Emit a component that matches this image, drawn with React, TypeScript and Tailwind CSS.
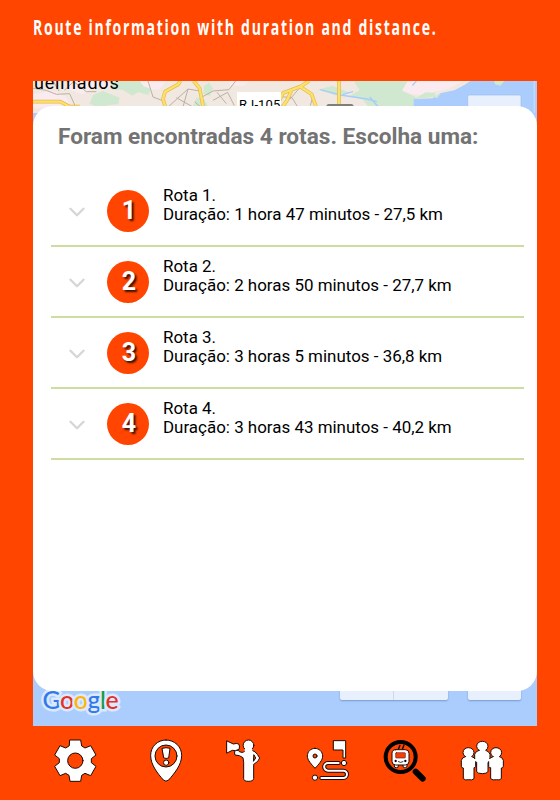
import React, { ReactNode } from "react";
import { ChevronDown } from "lucide-react";

type Route = {
    id: number;
    duration: string;
    distance: string;
};

const routes: Route[] = [
    { id: 1, duration: "1 hora 47 minutos", distance: "27,5 km" },
    { id: 2, duration: "2 horas 50 minutos", distance: "27,7 km" },
    { id: 3, duration: "3 horas 5 minutos", distance: "36,8 km" },
    { id: 4, duration: "3 horas 43 minutos", distance: "40,2 km" },
];

const MapTop: React.FC = () => (
    <svg viewBox="0 0 1512 96" className="block w-[504px] h-8">
        <rect width="1512" height="96" fill="#f1e9e1" />
        <g fill="#f9ebef">
            <path d="M110 0h150l-20 18-55 0-35 22-40-14zM0 40l60-10 40 18 10 20-60 14H0zM300 0h100l-20 25-60 5zM590 0h60l-20 14-40-2z" />
            <path d="M1110 0h180l-40 22-90 20-60-8z" />
        </g>
        <g fill="#d0e8cf">
            <path d="M230 0h90l12 16 22 8-8 18-30-8-18 10-30-18-30 0zM180 42l30-12 50 20-4 20-30 2-20 12-36-16zM262 0h40l18 22-40-6z" />
            <path d="M512 16l16-12 12 18-10 24-18-8zM490 50l24 6 14 24h-50z" />
            <path d="M962 0h162l-20 34-4 62h-80l-30-40-40-12 30-16zM854 26l44-12 50 20-30 12z" />
            <path d="M1090 20l62 30v46h-62z" />
        </g>
        <g fill="none" stroke="#bdb0a4" strokeWidth="3">
            <path d="M0 22l40 6 30 12 40-2 26 58M60 0l18 30M94 28l30-28M120 0l40 32 30 0M345 0l15 48 32 12M405 78l60-54 36 6M465 24l-15 54M430 50l50 28M485 62l18 16M500 52l40-22 48-4 20-26M540 58l44-24 20 40M552 34l28 34M735 46l42 4 16 26M800 20l-30 36M810 20l30 24-8 30" />
        </g>
        <g stroke="#a5cdfd" fill="none" strokeWidth="4">
            <path d="M862 26l60 16 80 12 30 8M1010 48l26 30M930 40l30-8" />
            <path d="M1150 0l-12 14" />
        </g>
        <path
            fill="#abcdfe"
            d="M1142 96V54l56-2 26-16 40-8 30-16 18-12h200v96z"
        />
        <path
            fill="#d0e8cf"
            d="M1144 54l34-20 30 2-6 12zM1384 0h30l-12 14-16-4zM1198 46l24-6-10 12z"
        />
        <path fill="none" stroke="#c5dcff" strokeWidth="4" d="M1504 0v96" />
        <g
            fill="none"
            stroke="#e6b84b"
            strokeWidth="11"
            strokeLinejoin="round"
        >
            <path d="M0 62h82l28 15h30M442 0l-6 10-40 22-6 22 12 42M482 0l18 22 14 74M775 30l-14 30-14 20M918 0v96M828 0l-24 16-54 20-18 40M800 16l36 24 14 40" />
        </g>
        <g fill="none" stroke="#fde26a" strokeWidth="7" strokeLinejoin="round">
            <path d="M0 62h82l28 15h30M442 0l-6 10-40 22-6 22 12 42M482 0l18 22 14 74M775 30l-14 30-14 20M918 0v96M828 0l-24 16-54 20-18 40M800 16l36 24 14 40" />
        </g>
        <rect x="612" y="33" width="132" height="63" fill="#fff" />
        <rect x="880" y="69" width="82" height="27" rx="8" fill="#7c8076" />
        <rect
            x="1304"
            y="42"
            width="160"
            height="60"
            rx="5"
            fill="#e8f0fe"
            stroke="#9bbbe9"
            strokeWidth="2"
        />
    </svg>
);

const GoogleLogo: React.FC = () => (
    <div className="absolute left-[9.5px] bottom-[10px] font-['Lato'] font-medium text-[24.8px] leading-8 tracking-[-0.4px] [-webkit-text-stroke:5px_#dbe8fd] [paint-order:stroke_fill] whitespace-nowrap">
        <span className="text-[#3079ed]">G</span>
        <span className="text-[#e53125]">o</span>
        <span className="text-[#fbb605]">o</span>
        <span className="text-[#3079ed]">g</span>
        <span className="text-[#159b45]">l</span>
        <span className="text-[#e53125]">e</span>
    </div>
);

const RouteRow: React.FC<{ route: Route }> = ({ route }) => (
    <li className="flex h-[71px] border-b-2 border-[#cddd9f]">
        <ChevronDown
            className="ml-[14px] mt-[24px] w-6 h-6 text-[#d6d6d6]"
            strokeWidth={2.2}
            viewBox="1 1 22 22"
        />
        <div className="ml-[18px] mt-[13.5px] flex size-[42px] items-center justify-center rounded-full bg-[#ff4500] pl-[2px] text-[25px] font-bold text-white [text-shadow:2px_2px_2px_#3b1000]">
            {route.id}
        </div>
        <div className="ml-[14px] mt-[10px] text-[16.95px] leading-[19px] text-black whitespace-nowrap">
            <p>Rota {route.id}.</p>
            <p>
                Duração: {route.duration} - {route.distance}
            </p>
        </div>
    </li>
);

type NavIconProps = {
    viewBox: string;
    className: string;
    children: ReactNode;
};

const NavIcon: React.FC<NavIconProps> = ({ viewBox, className, children }) => (
    <svg
        viewBox={viewBox}
        className={`h-[43px] shrink-0 ${className}`}
        fill="#fff"
        stroke="#1c0a05"
        strokeWidth="3"
        strokeLinejoin="round"
        strokeLinecap="round"
    >
        {children}
    </svg>
);

const BottomNav: React.FC = () => (
    <nav className="flex h-[74px] pt-[13px]">
        {/* settings */}
        <NavIcon viewBox="-64 -65 129 129" className="ml-[54px] w-[43px]">
            <path d="M-16-62H16L19-44 29-38 46-45 62-17 48-6V6L62 17 46 45 29 38 19 44 16 62H-16L-19 44-29 38-46 45-62 17-48 6V-6L-62-17-46-45-29-38-19-44Z" />
            <circle r="23" fill="#ff4500" />
        </NavIcon>
        {/* alert */}
        <NavIcon viewBox="0 0 99 129" className="ml-[53px] w-[33px]">
            <path d="M48 3C22 3 2 23 2 49C2 79 24 104 40 123Q48 130 56 123C72 104 95 79 95 49C95 23 74 3 48 3Z" />
            <circle cx="48" cy="51" r="33" fill="#ff4500" />
            <path d="M37 28Q48 24 60 28L56 57Q48 60 42 57Z" />
            <circle cx="48.500" cy="71" r="8" />
        </NavIcon>
        {/* announcer */}
        <NavIcon viewBox="0 0 105 129" className="ml-[43px] w-[35px]">
            <path d="M54 38Q58 34 67 34H78Q88 37 94 46L101 57Q98 68 83 76V119Q82 127 67 127Q53 127 53 119V70L51 56 40 50 27 48Q24 43 27 34L38 34 40 38 47 40Z" />
            <path d="M3 6L22 15Q34 11 39 16 42 24 39 31L28 35 19 34 3 42Z" />
            <circle cx="67.500" cy="19" r="16" />
            <path stroke="none" d="M56 30H79V42H56Z" />
            <path d="M84 48L89 57 83 66Z" fill="#ff4500" />
        </NavIcon>
        {/* route */}
        <NavIcon viewBox="0 0 129 129" className="ml-[45px] w-[43px]">
            <path d="M27 28C14 28 4 38 4 51C4 64 17 76 27 88C38 76 50 64 50 51C50 38 39 28 27 28Z" />
            <circle cx="27" cy="51" r="6" fill="#ff4500" />
            <path d="M83 5H119V57H111V33H83Z" />
            <path
                d="M98 72H66A11.500 11.500 0 0 0 66 95H112A10.500 10.500 0 0 1 112 117H46"
                fill="none"
                strokeWidth="12"
            />
            <path
                d="M98 72H66A11.500 11.500 0 0 0 66 95H112A10.500 10.500 0 0 1 112 117H46"
                fill="none"
                stroke="#fff"
                strokeWidth="6"
            />
            <circle cx="114" cy="72" r="8" />
            <circle cx="27" cy="116" r="8" />
        </NavIcon>
        {/* bus search, current page */}
        <NavIcon viewBox="0 0 129 129" className="ml-[34px] w-[43px]">
            <circle
                cx="53"
                cy="54"
                r="45"
                fill="none"
                stroke="#000"
                strokeWidth="12"
            />
            <path d="M98 98L119 119" stroke="#000" strokeWidth="18" />
            <path d="M46 31L51 19M58 31L63 18" stroke="#000" strokeWidth="4" />
            <rect x="34" y="72" width="12" height="14" rx="5" />
            <rect x="60" y="72" width="12" height="14" rx="5" />
            <rect x="27" y="32" width="51" height="46" rx="11" />
            <rect
                x="38"
                y="41"
                width="29"
                height="16"
                rx="2"
                fill="#f63d0c"
                stroke="#6b2415"
                strokeWidth="2"
            />
            <path d="M46 68Q53 73 60 68" fill="none" strokeWidth="2.5" />
            <g fill="#000" stroke="none">
                <circle cx="38" cy="66" r="3.5" />
                <circle cx="67" cy="66" r="3.5" />
            </g>
        </NavIcon>
        {/* community */}
        <NavIcon viewBox="0 0 132 129" className="ml-[34px] w-[44px]">
            <path d="M57 34Q50 29 50 22C50 12 58 7 67 7S84 12 84 22Q84 29 77 34Q88 37 90 46V68Q87 74 84 70V98Q80 104 67 104Q53 104 50 98V70Q46 72 44 66V46Q46 37 57 34Z" />
            <path d="M16 53Q9 48 9 41C9 31 17 26 25 26S42 31 42 41Q42 48 35 53Q44 54 47 64V82Q45 88 42 86V119Q36 125 26 122Q16 125 10 119V87Q5 88 4 82V64Q6 55 16 53Z" />
            <path d="M99 53Q92 48 92 41C92 31 100 26 108 26S125 31 125 41Q125 48 118 53Q127 54 130 64V82Q128 88 124 87V119Q118 125 109 122Q98 125 92 119V86Q88 88 86 82V64Q89 55 99 53Z" />
            {/* joins the shoulders */}
            <path stroke="none" d="M40 60H51V67H40ZM82 60H93V67H82Z" />
        </NavIcon>
    </nav>
);

const App: React.FC = () => {
    return (
        <div className="w-[560px] h-[800px] overflow-hidden bg-[#ff4500] font-['Roboto',sans-serif]">
            <header className="h-[81px] pl-[33px] pt-[12px]">
                <h1 className="w-max origin-left scale-x-[0.654] font-['Open_Sans',sans-serif] text-[21.5px] leading-[30px] font-bold tracking-[2.6px] text-white whitespace-nowrap">
                    Route information with duration and distance.
                </h1>
            </header>
            <main className="relative ml-[33px] h-[645px] w-[504px] overflow-hidden bg-[#abcdfe] pt-[25px]">
                <div className="absolute inset-x-0 top-0">
                    <MapTop />
                    <span className="absolute left-px -top-[10px] text-[18px] leading-6 tracking-[0.8px] text-black">
                        ueimados
                    </span>
                    <span className="absolute left-[206px] top-[16px] text-[13px] leading-4 tracking-[0.1px] text-black">
                        RJ-105
                    </span>
                </div>
                <div className="absolute bottom-[26px] left-[307px] flex h-8 w-[108px] rounded-[2px] bg-[#e8f0fe] shadow-[0_1px_2px_#789bcb]">
                    <div className="w-[54px] border-r border-[#cbd8ed]" />
                </div>
                <div className="absolute bottom-[26px] left-[435px] h-8 w-[53px] rounded-[2px] bg-[#e8f0fe] shadow-[0_1px_2px_#789bcb]" />
                <GoogleLogo />
                <section className="relative h-[585px] rounded-[20px] bg-white pl-[18px] pr-[13px] pt-[15px]">
                    <h2 className="ml-[7px] text-[22.6px] leading-8 font-bold text-[#737373] whitespace-nowrap">
                        Foram encontradas 4 rotas. Escolha uma:
                    </h2>
                    <ul className="mt-[23px]">
                        {routes.map((route) => (
                            <RouteRow key={route.id} route={route} />
                        ))}
                    </ul>
                </section>
            </main>
            <BottomNav />
        </div>
    );
};

export default App;
